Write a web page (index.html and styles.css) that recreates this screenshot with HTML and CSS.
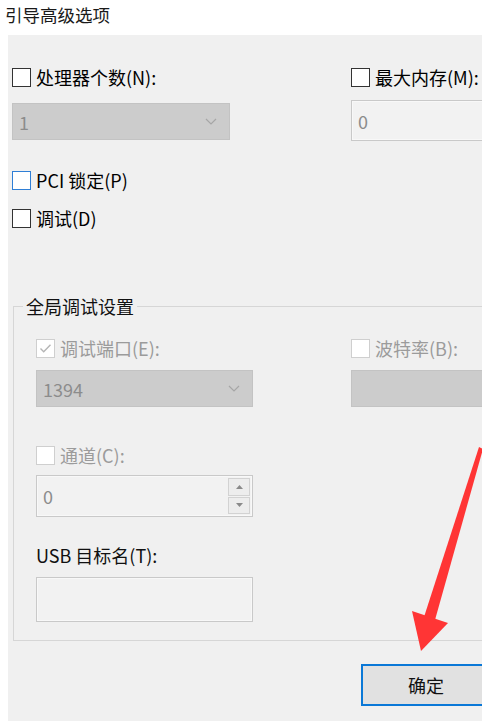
FILE: index.html
```html
<!doctype html>
<html>
  <head>
    <meta charset=utf-8>
    <title>引导高级选项</title>
    <link rel="stylesheet" href="styles.css">
  </head>
  <body>
    <div class="title">引导高级选项</div>
    <div class="panel">
      <div class="cols">
        <div class="col">
          <label class="check"><span class="box"></span>处理器个数(N):</label>
          <div class="combo top-combo"><span>1</span>
            <svg class="chev" width="12" height="7" viewBox="0 0 12 7"><path d="M1 1l5 5 5-5" fill="none" stroke="#a6a6a6" stroke-width="1.2"/></svg>
          </div>
          <label class="check pci"><span class="box blue"></span>PCI 锁定(P)</label>
          <label class="check debug"><span class="box"></span>调试(D)</label>
        </div>
        <div class="col">
          <label class="check"><span class="box"></span>最大内存(M):</label>
          <div class="textbox mem">0</div>
        </div>
      </div>

      <fieldset class="group">
        <legend>全局调试设置</legend>
        <div class="group-body">
          <div class="col">
            <label class="check off"><span class="box dim">
              <svg width="15" height="15" viewBox="0 0 15 15"><path d="M2.5 7.5l3.2 3.2 6.8-7" fill="none" stroke="#b5b5b5" stroke-width="1.4"/></svg>
            </span>调试端口(E):</label>
            <div class="combo port"><span>1394</span>
              <svg class="chev" width="12" height="7" viewBox="0 0 12 7"><path d="M1 1l5 5 5-5" fill="none" stroke="#a6a6a6" stroke-width="1.2"/></svg>
            </div>
            <label class="check off channel"><span class="box dim"></span>通道(C):</label>
            <div class="textbox spin"><span>0</span>
              <div class="spin-btns">
                <div class="spin-btn"><svg width="7" height="4" viewBox="0 0 7 4"><path d="M0 4l3.5-4 3.5 4z" fill="#8a8a8a"/></svg></div>
                <div class="spin-btn"><svg width="7" height="4" viewBox="0 0 7 4"><path d="M0 0l3.5 4 3.5-4z" fill="#8a8a8a"/></svg></div>
              </div>
            </div>
            <div class="plain">USB 目标名(T):</div>
            <div class="textbox usb"></div>
          </div>
          <div class="col">
            <label class="check off"><span class="box dim"></span>波特率(B):</label>
            <div class="combo baud"></div>
          </div>
        </div>
      </fieldset>

      <div class="actions">
        <button class="btn">确定</button>
      </div>
    </div>

    <svg class="arrow" width="482" height="721" viewBox="0 0 482 721">
      <polygon points="479,447 483,449 435,620 424,617" fill="#ff3535"/>
      <polygon points="412,611 448,623 421,651" fill="#ff3535"/>
    </svg>
  </body>
</html>
```

FILE: styles.css
```css
*{
  box-sizing:border-box;
}
html{
  overflow:hidden;
}
body{
  margin:0;
  width:482px;
  height:721px;
  overflow:hidden;
  background:#fff;
  font-family:"Noto Sans CJK SC","Microsoft YaHei",sans-serif;
  font-size:18px;
  color:#000;
  position:relative;
}

.title{
  height:35px;
  line-height:30px;
  padding-left:5px;
  font-size:17.5px;
  color:#1a1a1a;
}

.panel{
  margin-left:8px;
  width:474px;
  height:686px;
  overflow:hidden;
  background:#f0f0f0;
  padding:32px 0 0 4px;
}

.cols{
  display:grid;
  grid-template-columns:339px 200px;
}
.col{
  display:flex;
  flex-direction:column;
  align-items:flex-start;
}

.check{
  display:flex;
  align-items:center;
  gap:5px;
  height:20px;
  line-height:20px;
  white-space:nowrap;
}
.check.off{
  color:#9b9b9b;
}
.box{
  flex:none;
  width:19px;
  height:19px;
  border:1.5px solid #333;
  background:#fff;
  display:flex;
  align-items:center;
  justify-content:center;
}
.box.blue{
  border-color:#2f7fd6;
}
.box.dim{
  border:1px solid #cfcfcf;
}

.combo{
  display:flex;
  align-items:center;
  justify-content:space-between;
  background:#cccccc;
  border:1px solid #c3c3c3;
  color:#8c8c8c;
  height:37px;
  padding:0 12px 0 6px;
}
.top-combo{
  width:218px;
  margin-top:16px;
}
.pci{
  margin-top:30px;
}
.debug{
  margin-top:18px;
}

.textbox{
  display:flex;
  align-items:center;
  background:#f2f2f2;
  border:1px solid #c9c9c9;
  box-shadow:inset 0 0 0 1px #f8f8f8;
  color:#8c8c8c;
  padding-left:6px;
}
.mem{
  width:160px;
  height:41px;
  margin-top:13px;
}

.group{
  margin:68px 0 0 1px;
  padding:0;
  width:540px;
  border:1px solid #d6d6d6;
  height:345px;
}
.group legend{
  margin-left:9px;
  padding:0 3px;
  line-height:20px;
  color:#111;
}
.group-body{
  display:grid;
  grid-template-columns:315px 200px;
  padding:22px 0 0 22px;
}

.port{
  width:217px;
  margin-top:12px;
}
.baud{
  width:160px;
  margin-top:12px;
}
.channel{
  margin-top:38px;
}
.spin{
  width:217px;
  height:42px;
  margin-top:10px;
  justify-content:space-between;
  padding-right:2px;
}
.spin-btns{
  display:flex;
  flex-direction:column;
  gap:1px;
  width:22px;
  height:36px;
}
.spin-btn{
  flex:1;
  background:#ededed;
  border:1px solid #d2d2d2;
  display:flex;
  align-items:center;
  justify-content:center;
}
.plain{
  margin-top:28px;
  line-height:20px;
  height:20px;
  color:#111;
}
.usb{
  width:217px;
  height:45px;
  margin-top:12px;
}

.actions{
  padding:23px 0 0 349px;
}
.btn{
  width:130px;
  height:42px;
  background:#e1e1e1;
  border:2px solid #0a78d7;
  font-family:inherit;
  font-size:18px;
  color:#111;
  padding:0;
}

.arrow{
  position:absolute;
  left:0;
  top:0;
  pointer-events:none;
}
```
